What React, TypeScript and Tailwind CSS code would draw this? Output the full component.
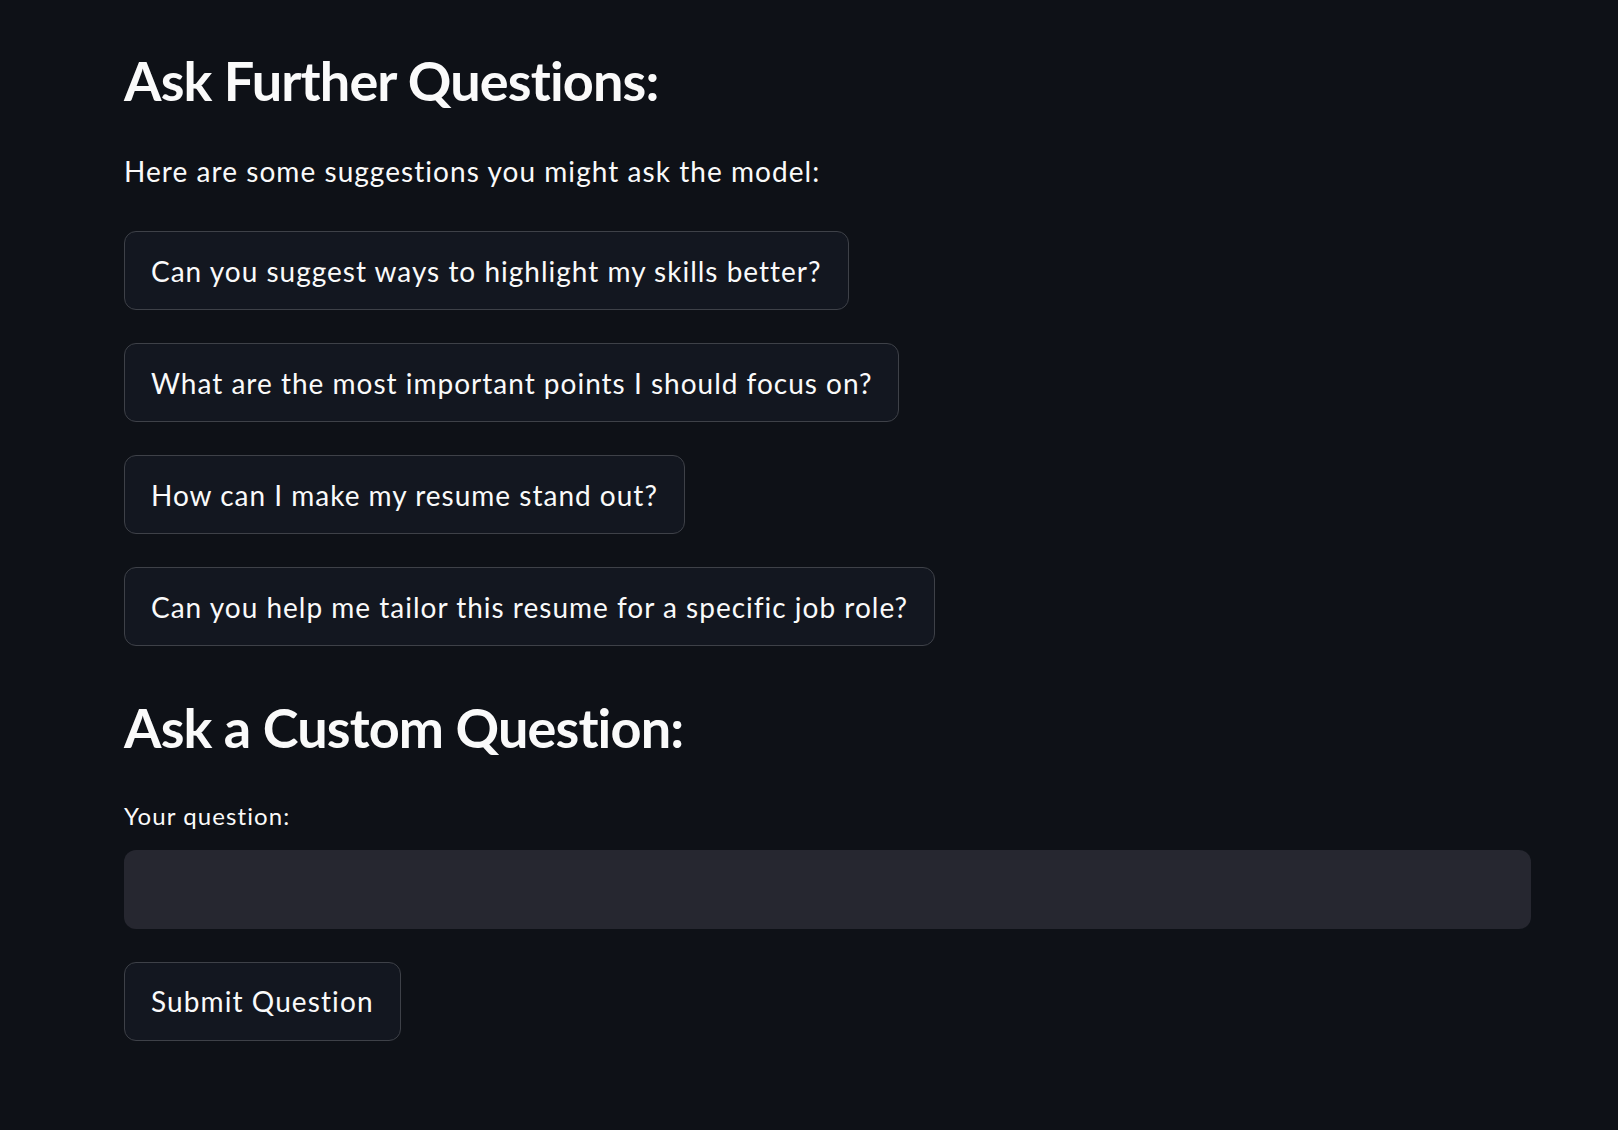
import React, { useState } from 'react';

const suggestions = [
  'Can you suggest ways to highlight my skills better?',
  'What are the most important points I should focus on?',
  'How can I make my resume stand out?',
  'Can you help me tailor this resume for a specific job role?',
];

export default function App() {
  const [question, setQuestion] = useState('');

  return (
    <div
      className="min-h-screen w-full bg-[#0e1117] text-[#fafafa]"
      style={{ fontFamily: 'Lato, "Noto Sans", sans-serif' }}
    >
      <div className="pl-[124px] pr-[87px] pt-[49px] pb-[60px]">
        {/* Suggested questions */}
        <h2 className="text-[54px] font-bold leading-[1.2] tracking-[-0.85px]">Ask Further Questions:</h2>
        <p className="mt-[41px] text-[28px] leading-[1.2] tracking-[1.05px]">
          Here are some suggestions you might ask the model:
        </p>
        <div className="mt-[43px] flex flex-col items-start gap-[33px]">
          {suggestions.map((s) => (
            <button
              key={s}
              type="button"
              onClick={() => setQuestion(s)}
              className="h-[79px] px-[26px] rounded-[12px] border border-[#3e4148] bg-[#131720] text-[28px] leading-none tracking-[1px] text-[#fafafa] hover:border-[#ff4b4b] hover:text-[#ff4b4b]"
            >
              {s}
            </button>
          ))}
        </div>

        {/* Custom question */}
        <h2 className="mt-[50px] text-[54px] font-bold leading-[1.2] tracking-[-0.85px]">Ask a Custom Question:</h2>
        <label htmlFor="q" className="mt-[41px] block text-[24px] leading-[1.2] tracking-[1.1px]">
          Your question:
        </label>
        <input
          id="q"
          value={question}
          onChange={(e) => setQuestion(e.target.value)}
          className="mt-[19px] block h-[79px] w-full rounded-[12px] bg-[#262730] px-[26px] text-[28px] text-[#fafafa] outline-none"
        />
        <button
          type="button"
          className="mt-[33px] h-[79px] px-[26px] rounded-[12px] border border-[#3e4148] bg-[#131720] text-[28px] leading-none tracking-[1.1px] text-[#fafafa]"
        >
          Submit Question
        </button>
      </div>
    </div>
  );
}
